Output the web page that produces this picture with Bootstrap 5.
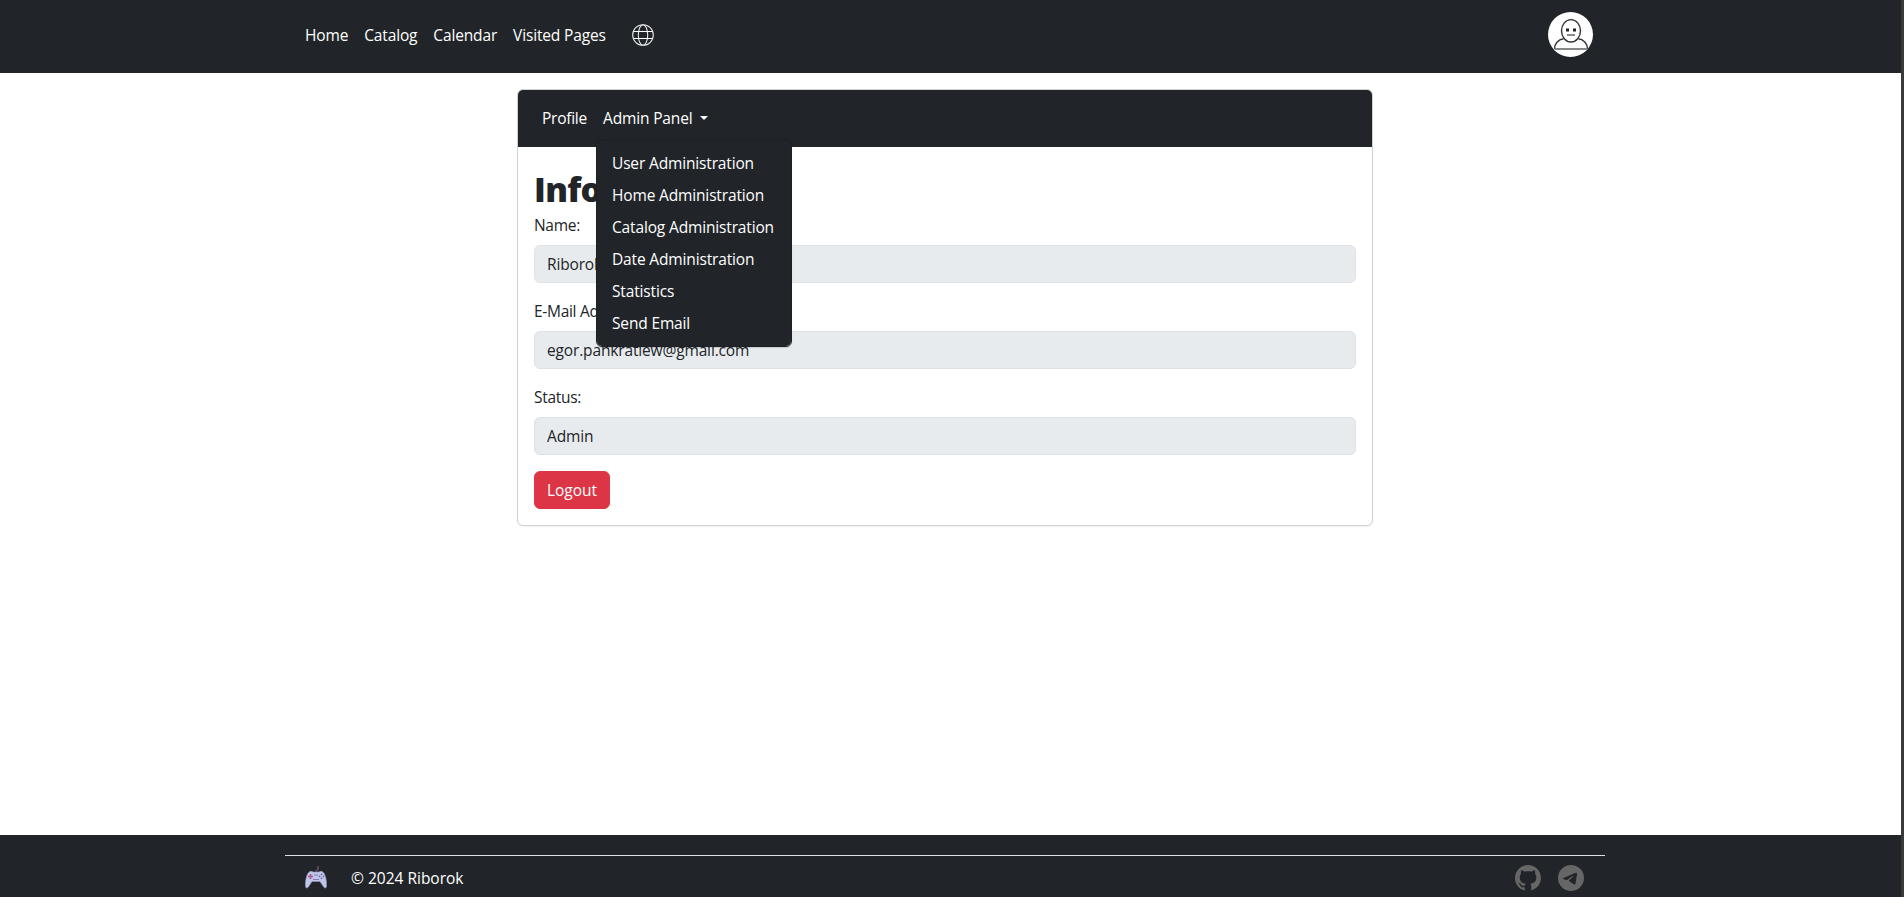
<!DOCTYPE html>
<html lang="en">
<head>
<meta charset="utf-8">
<meta name="viewport" content="width=device-width, initial-scale=1">
<title>Profile</title>
<link href="https://cdn.jsdelivr.net/npm/bootstrap@5.3.0/dist/css/bootstrap.min.css" rel="stylesheet">
<style>
html { overflow: hidden; }
body { font-family: "Open Sans", "Noto Sans", sans-serif; font-size: 15.5px; line-height: 24px; letter-spacing: -.15px; height: 897px; overflow: hidden; border-right: 3px solid #3a3a3a; }
.page-width { width: 1320px; margin-left: 285px; }
.topbar { height: 73px; }
.topbar .nav-link, .subnav .nav-link { color: #fff; padding: 8px; }
.nav-link, .dropdown-item, .btn, .form-control { font-size: inherit; line-height: 24px; letter-spacing: inherit; }
.main-nav { margin: 7px 0 0 12px; }
.globe { margin: 16px 0 0 18px; }
.avatar { margin: 4px 12px 0 auto; }
.subnav { height: 57px; padding: 8px 16px; }
.profile-card { border-color: #d0d1d2; border-radius: 6px; box-shadow: 0 1px 2px rgba(0,0,0,.06); }
.profile-card .card-header { border-radius: 5px 5px 0 0; }
.subnav .nav-link:not(.dropdown-toggle) { letter-spacing: -.25px; }
.admin-menu { width: 196px; top: 41px; left: 1px; padding: 7px 0; font-size: inherit; border-color: #1d2024; box-shadow: 0 1px 1px rgba(0,0,0,.15); }
.admin-menu .dropdown-item { color: #fff; padding: 4px 15px; }
.info-title { font-weight: 800; font-size: 34px; line-height: 42px; letter-spacing: -.7px; padding-top: 5px; height: 42px; }
.form-label { letter-spacing: -.3px; }
.form-control[readonly] { background: #e8ebee; height: 38px; padding: 6px 12px; border-color: #dee2e6; }
.btn-danger { width: 76px; padding: 6px 0; letter-spacing: 0; }
.site-footer { height: 62px; padding-top: 20px; }
.footer-rule { height: 45px; border-top: 1px solid #dee2e6; }
.gamepad { margin: -1px 24px 0 20px; }
.copyright { letter-spacing: 0; }
.telegram { margin: 0 21px 0 17px; }
</style>
</head>
<body class="d-flex flex-column bg-white">
<header class="topbar bg-dark">
  <div class="page-width d-flex align-items-start pt-2">
    <nav class="nav flex-nowrap main-nav">
      <a class="nav-link" href="#">Home</a>
      <a class="nav-link" href="#">Catalog</a>
      <a class="nav-link" href="#">Calendar</a>
      <a class="nav-link" href="#">Visited Pages</a>
    </nav>
    <svg class="globe" width="22" height="22" viewBox="0 0 22 22" fill="none" stroke="#e4e4e4" stroke-width="1.1"><circle cx="11" cy="11" r="10.3"/><ellipse cx="11" cy="11" rx="4.7" ry="10.3"/><path d="M1.4 7.5h19.2M1.4 14.5h19.2" stroke="#fff"/></svg>
    <svg class="avatar" width="45" height="45" viewBox="0 0 45 45"><circle cx="22.5" cy="22.5" r="22.5" fill="#fff"/><g fill="none" stroke="#333" stroke-width="1.4"><ellipse cx="23" cy="18.8" rx="9.5" ry="11.2"/><path d="M6.5 37c0-5 3.500-9.500 9-10.200M30.500 26.800c5.500.7 9 5.200 9 10.200"/></g><path d="M6.500 37h33" stroke="#888" stroke-width="2"/><path d="M18 16.500h3v3h-3zM25 16.500h3v3h-3z" fill="#222"/><path d="M19 23h8" stroke="#888" stroke-width="2"/></svg>
  </div>
</header>
<main class="page-width flex-grow-1">
  <div class="row justify-content-center m-0">
    <div class="col-8 pt-3">
      <div class="card profile-card">
        <div class="card-header subnav bg-dark border-0">
          <ul class="nav flex-nowrap">
            <li class="nav-item"><a class="nav-link" href="#">Profile</a></li>
            <li class="nav-item dropdown"><a class="nav-link dropdown-toggle" href="#">Admin Panel&nbsp;</a>
              <ul class="dropdown-menu show admin-menu bg-dark">
                <li><a class="dropdown-item" href="#">User Administration</a></li>
                <li><a class="dropdown-item" href="#">Home Administration</a></li>
                <li><a class="dropdown-item" href="#">Catalog Administration</a></li>
                <li><a class="dropdown-item" href="#">Date Administration</a></li>
                <li><a class="dropdown-item" href="#">Statistics</a></li>
                <li><a class="dropdown-item" href="#">Send Email</a></li>
              </ul>
            </li>
          </ul>
        </div>
        <div class="card-body">
          <h1 class="info-title mb-2">Info</h1>
          <div class="mb-3"><label class="form-label mb-2 d-block">Name:</label><input class="form-control" readonly value="Riborok"></div>
          <div class="mb-3"><label class="form-label mb-2 d-block">E-Mail Address:</label><input class="form-control" readonly value="egor.pankratiew@gmail.com"></div>
          <div class="mb-3"><label class="form-label mb-2 d-block">Status:</label><input class="form-control" readonly value="Admin"></div>
          <button class="btn btn-danger">Logout</button>
        </div>
      </div>
    </div>
  </div>
</main>
<footer class="site-footer bg-dark text-white flex-shrink-0">
  <div class="page-width footer-rule d-flex align-items-center">
    <svg class="gamepad" width="22" height="24" viewBox="0 0 22 24"><path d="M11 6c-.5-2 2-1.500 2-3V0" fill="none" stroke="#75517b" stroke-width="1.300"/><path d="M5 5.500C6.500 5 7.500 6 8.500 6h5c1 0 2-1 3.500-.5 3 .8 5 9 4.500 14.500-.2 2.500-1.700 2.500-3 .8L15 15.500H7L3.500 20.800C2.200 22.500.7 22.500.5 20 0 14.500 2 6.300 5 5.500z" fill="#bfc6e8" stroke="#9a90c4" stroke-width=".6"/><path d="M5.500 8v5M3 10.500h5" stroke="#b0568f" stroke-width="1.600"/><g fill="#75699d"><circle cx="16.500" cy="8.300" r=".9"/><circle cx="14.500" cy="10.300" r=".9"/><circle cx="18.500" cy="10.300" r=".9"/><circle cx="16.500" cy="12.300" r=".9"/></g><path d="M9 9h4M8 13.500h6" stroke="#7c72ac" stroke-width=".9"/></svg>
    <span class="copyright">© 2024 Riborok</span>
    <svg class="ms-auto" width="26" height="26" viewBox="0 0 16 16" fill="#666"><path d="M8 0C3.58 0 0 3.58 0 8c0 3.540 2.290 6.530 5.470 7.590.4.070.55-.17.55-.38 0-.19-.01-.82-.01-1.490-2.010.37-2.530-.49-2.690-.94-.09-.23-.48-.94-.82-1.130-.28-.15-.68-.52-.01-.53.63-.01 1.080.58 1.230.82.72 1.210 1.870.87 2.330.66.07-.52.28-.87.51-1.070-1.780-.2-3.640-.89-3.640-3.950 0-.87.31-1.590.82-2.150-.08-.2-.36-1.020.08-2.120 0 0 .67-.21 2.200.82.64-.18 1.320-.27 2-.27s1.360.09 2 .27c1.530-1.040 2.200-.82 2.200-.82.44 1.100.16 1.920.08 2.120.51.56.82 1.270.82 2.150 0 3.070-1.870 3.750-3.650 3.950.29.25.54.73.54 1.480 0 1.070-.01 1.930-.01 2.200 0 .21.15.46.55.38A8.010 8.010 0 0 0 16 8c0-4.420-3.580-8-8-8z"/></svg>
    <svg class="telegram" width="26" height="26" viewBox="0 0 16 16" fill="#666"><path d="M16 8A8 8 0 1 1 0 8a8 8 0 0 1 16 0zM8.287 5.906c-.778.324-2.334.994-4.666 2.010-.378.15-.577.298-.595.442-.03.243.275.339.69.470l.175.055c.408.133.958.288 1.243.294.26.006.549-.1.868-.32 2.179-1.471 3.304-2.214 3.374-2.230.05-.012.120-.026.166.016.047.041.042.120.037.141-.03.129-1.227 1.241-1.846 1.817-.193.180-.330.307-.358.336a8.154 8.154 0 0 1-.188.186c-.380.366-.664.640.015 1.088.327.216.589.393.850.571.284.194.568.387.936.629.093.060.183.125.270.187.331.236.630.448.997.414.214-.020.435-.220.547-.820.265-1.417.786-4.486.906-5.751a1.426 1.426 0 0 0-.013-.315.337.337 0 0 0-.114-.217.526.526 0 0 0-.310-.093c-.300.005-.763.166-2.984 1.090z"/></svg>
  </div>
</footer>
<script src="https://cdn.jsdelivr.net/npm/bootstrap@5.3.0/dist/js/bootstrap.bundle.min.js"></script>
</body>
</html>
